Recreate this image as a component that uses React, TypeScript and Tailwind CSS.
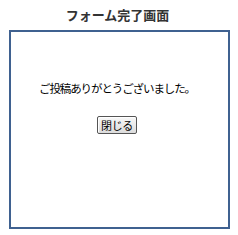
export default function App() {
  return (
    <div className="w-[238px] h-[235px] bg-white">
      <div className="pt-[7px] pr-[3px] h-[30px] text-center text-[13px] font-bold leading-[16px] text-[#333333] font-['Noto_Sans_CJK_JP',sans-serif]">
        フォーム完了画面
      </div>
      <div className="ml-[9px] w-[221px] h-[199px] border-2 border-[#3f6190] pr-[5px] flex flex-col items-center font-['Noto_Sans_CJK_JP',sans-serif]">
        <p className="mt-[50px] text-[11.5px] leading-[13px] tracking-[-1.1px] text-black">
          ご投稿ありがとうございました。
        </p>
        <button className="mt-[21px] w-[40px] h-[18px] border border-[#555555] rounded-[2px] bg-gradient-to-b from-[#f8f8f8] to-[#dcdcdc] text-[11px] leading-[14px] tracking-[-0.3px] text-black shadow-[inset_1px_1px_0_#ffffff]">
          閉じる
        </button>
      </div>
    </div>
  );
}
